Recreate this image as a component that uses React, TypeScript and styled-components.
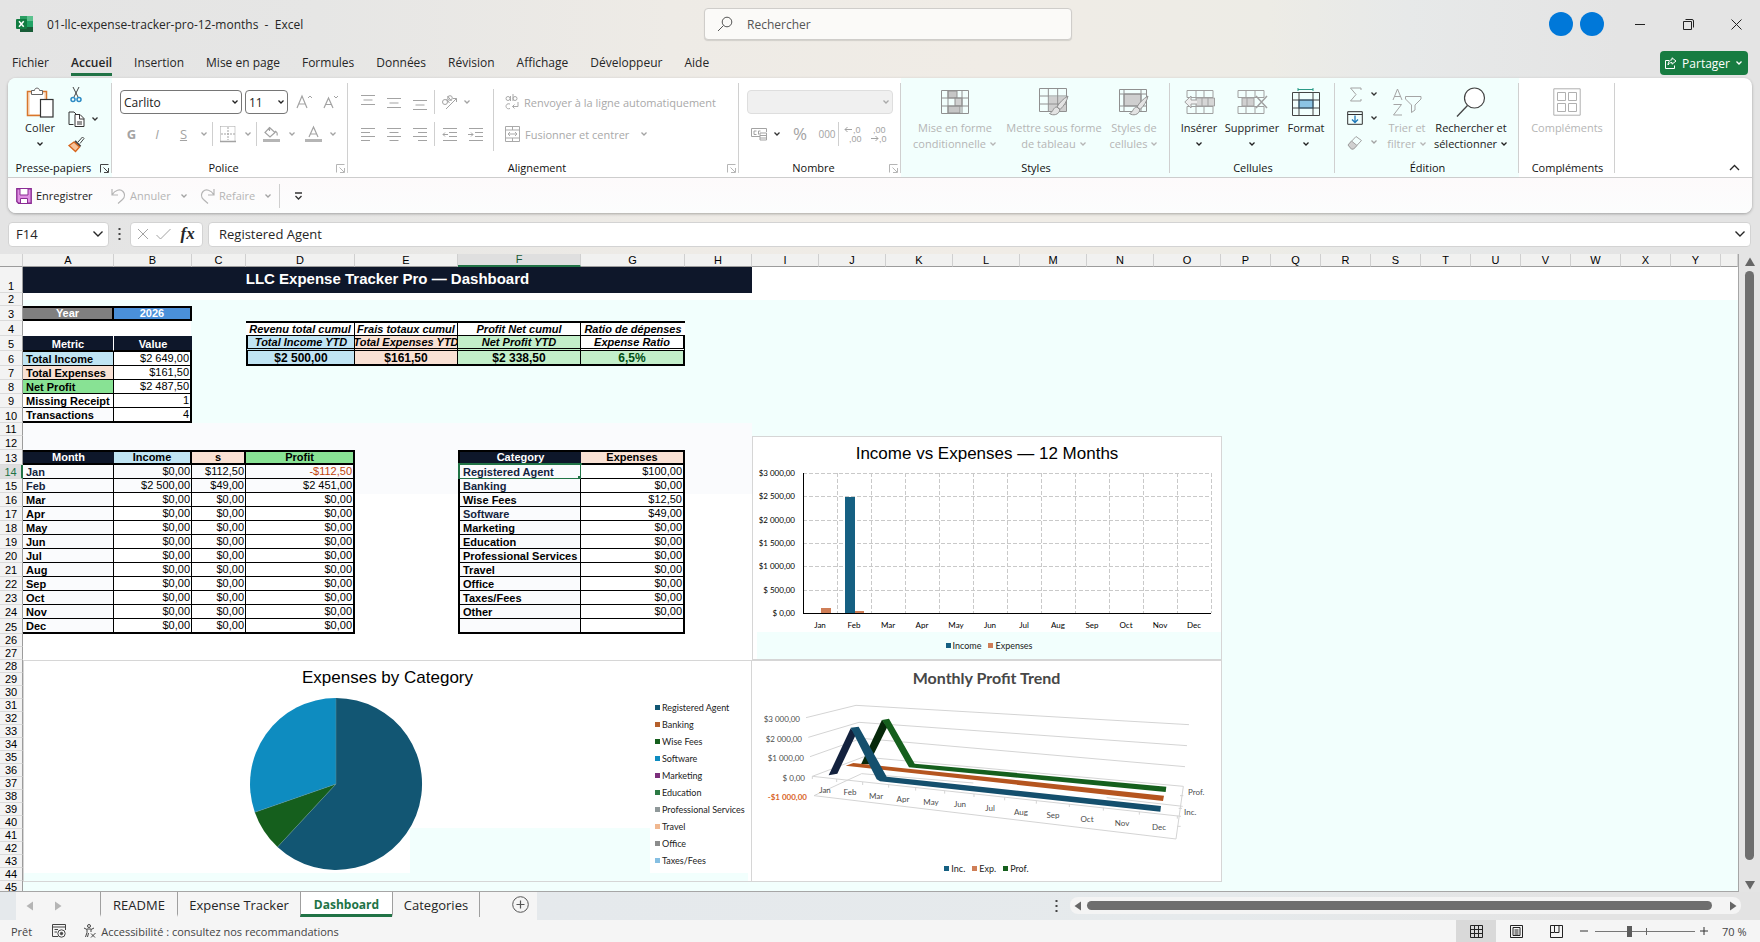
import React from 'react';
import styled, { createGlobalStyle, css } from 'styled-components';

const ui = "'Open Sans', 'Noto Sans', sans-serif";
const arial = "'Liberation Sans', Arial, sans-serif";
const lato = "Lato, 'Open Sans', sans-serif";
const mint = '#f2fffd';
const green = '#217346';

const Global = createGlobalStyle`
  *, *::before, *::after { box-sizing: border-box; }
  body { margin: 0; font-family: ${ui}; font-size: 12px; color: #262626; }
  button, select, input { font: inherit; color: inherit; margin: 0; }
  button { background: none; border: 0; padding: 0; }
  svg { display: block; flex: none; overflow: visible; }
`;

const Window = styled.div`
  height: 100vh;
  min-height: 600px;
  display: flex;
  flex-direction: column;
  overflow: hidden;
  background: linear-gradient(90deg, #e4e4e4 0%, #e6e6e5 18%, #eeebe6 38%, #f0ece6 56%, #edece6 72%, #e7e9e9 80%, #e4e4e4 92%, #e4e4e4 100%);
`;

/* ---------- title bar ---------- */
const TitleBar = styled.header`
  height: 48px;
  flex: none;
  display: grid;
  grid-template-columns: 1fr 368px 1fr;
  align-items: center;
  padding-left: 16px;
`;
const DocName = styled.h1`
  display: flex;
  align-items: center;
  gap: 14px;
  margin: 0;
  font-size: 12px;
  font-weight: 400;
  white-space: pre;
`;
const SearchBox = styled.label`
  height: 32px;
  display: flex;
  align-items: center;
  gap: 12px;
  padding: 0 12px;
  background: #fbfaf8;
  border: 1px solid #cfcdca;
  border-radius: 4px;
  box-shadow: 0 1px 1px rgba(0, 0, 0, 0.12);
  input {
    flex: 1;
    min-width: 0;
    border: 0;
    background: none;
    outline: 0;
    font-size: 12px;
  }
  input::placeholder { color: #555; opacity: 1; }
`;
const WindowControls = styled.div`
  display: flex;
  justify-content: flex-end;
  align-items: center;
`;
const Avatar = styled.span`
  width: 24px;
  height: 24px;
  margin-right: 7px;
  border-radius: 50%;
  background: #0078d9;
`;
const ControlButton = styled.button`
  width: 48px;
  height: 48px;
  display: grid;
  place-items: center;
`;
const Controls = styled.div`
  display: flex;
  margin-left: 5px;
`;

/* ---------- tabs ---------- */
const TabRow = styled.nav`
  height: 30px;
  flex: none;
  display: flex;
  justify-content: space-between;
  padding: 3px 12px 3px 12px;
`;
const TabList = styled.div`
  display: flex;
  gap: 22px;
`;
const RibbonTab = styled.button<{ $active?: boolean }>`
  height: 25px;
  padding-top: 2px;
  font-size: 12px;
  line-height: 20px;
  border-bottom: 3px solid ${p => (p.$active ? green : 'transparent')};
  font-weight: ${p => (p.$active ? 600 : 400)};
`;
const ShareButton = styled.button`
  height: 24px;
  display: flex;
  align-items: center;
  gap: 5px;
  padding: 0 5px;
  border-radius: 4px;
  background: #177c41;
  color: #fff;
  font-size: 12px;
`;

/* ---------- ribbon ---------- */
const RibbonCard = styled.section`
  flex: none;
  margin: 0 8px;
  border-radius: 8px;
  background: #fff;
  box-shadow: 0 1px 3px rgba(0, 0, 0, 0.3);
  overflow: hidden;
`;
const Groups = styled.div`
  height: 100px;
  display: flex;
  border-bottom: 1px solid #cdcdcd;
`;
const Group = styled.div<{ $w: number; $tint?: boolean }>`
  flex: 0 1 ${p => p.$w}px;
  display: flex;
  flex-direction: column;
  background: linear-gradient(#d0d0d0, #d0d0d0) right center / 1px 90px no-repeat, ${p => (p.$tint ? mint : '#fff')};
`;
const GroupBody = styled.div<{ $left?: number; $center?: boolean }>`
  flex: 1;
  display: flex;
  align-items: flex-start;
  justify-content: ${p => (p.$center ? 'center' : 'flex-start')};
  padding-left: ${p => p.$left ?? 0}px;
`;
const GroupFoot = styled.div`
  height: 18px;
  display: flex;
  align-items: center;
  padding: 0 1px 0 2px;
  font-size: 11px;
  line-height: 18px;
  color: #111;
  text-align: center;
  span { flex: 1; }
`;
const Launcher = styled.button`
  width: 14px;
  height: 14px;
  display: grid;
  place-items: center;
`;
const Stack = styled.div<{ $top: number; $gap?: number; $left?: number }>`
  display: flex;
  flex-direction: column;
  gap: ${p => p.$gap ?? 0}px;
  padding-top: ${p => p.$top}px;
  padding-left: ${p => p.$left ?? 0}px;
`;
const ToolRow = styled.div`
  display: flex;
  align-items: center;
  height: 24px;
`;
const Tool = styled.button<{ $w?: number; $off?: boolean }>`
  width: ${p => p.$w ?? 26}px;
  height: 25px;
  display: flex;
  align-items: center;
  justify-content: center;
  color: ${p => (p.$off ? '#a3a3a3' : '#333')};
`;
const WideTool = styled.button`
  height: 24px;
  display: flex;
  align-items: center;
  gap: 5px;
  color: #a9a9a9;
  font-size: 11px;
  white-space: nowrap;
`;
const Rule = styled.i<{ $h?: number; $m?: number }>`
  width: 1px;
  height: ${p => p.$h ?? 24}px;
  margin: 0 ${p => p.$m ?? 1}px;
  background: #cfcfcf;
`;
const Letter = styled.span<{ $size?: number; $weight?: number; $italic?: boolean; $under?: boolean }>`
  font-size: ${p => p.$size ?? 13}px;
  line-height: 18px;
  font-weight: ${p => p.$weight ?? 400};
  font-style: ${p => (p.$italic ? 'italic' : 'normal')};
  text-decoration: ${p => (p.$under ? 'underline' : 'none')};
`;
const SelectWrap = styled.div<{ $w: number; $off?: boolean }>`
  width: ${p => p.$w}px;
  height: 24px;
  display: grid;
  align-items: center;
  margin-right: 3px;
  border: 1px solid ${p => (p.$off ? '#dedede' : '#767676')};
  border-radius: 4px;
  background: ${p => (p.$off ? '#f0f0f0' : '#fff')};
  color: ${p => (p.$off ? '#a9a9a9' : '#222')};
  select, svg { grid-area: 1 / 1; }
  select {
    appearance: none;
    height: 22px;
    padding: 0 3px;
    border: 0;
    background: none;
    font-size: 12px;
    outline: 0;
  }
  svg { justify-self: end; margin-right: 2px; pointer-events: none; }
`;
const BigButton = styled.button<{ $w: number; $off?: boolean }>`
  width: ${p => p.$w}px;
  padding-top: 6px;
  display: flex;
  flex-direction: column;
  align-items: center;
  font-size: 11px;
  line-height: 16px;
  white-space: nowrap;
  color: ${p => (p.$off ? '#b5b5b5' : '#222')};
`;
const BigIcon = styled.span`
  height: 36px;
  display: grid;
  place-items: center;
`;
const Line = styled.span`
  height: 16px;
  display: flex;
  align-items: center;
  gap: 3px;
`;
const CollapseSlot = styled.div`
  flex: 1;
  display: flex;
  align-items: flex-end;
  justify-content: flex-end;
  padding: 0 12px 6px 0;
`;
const QuickBar = styled.div`
  height: 35px;
  display: flex;
  align-items: center;
  padding-left: 8px;
  background: linear-gradient(#fdfafb, #fcfdfd);
`;
const QuickButton = styled.button<{ $off?: boolean; $w: number; $pad?: number }>`
  width: ${p => p.$w}px;
  padding-left: ${p => p.$pad ?? 0}px;
  height: 24px;
  display: flex;
  align-items: center;
  gap: 4px;
  font-size: 11px;
  color: ${p => (p.$off ? '#b5b5b5' : '#222')};
`;

/* ---------- formula bar ---------- */
const FormulaBar = styled.div`
  height: 41px;
  flex: none;
  display: flex;
  align-items: center;
  padding: 1px 9px 0 8px;
`;
const Field = styled.div<{ $w?: number; $pad: number }>`
  flex: ${p => (p.$w ? `0 0 ${p.$w}px` : '1')};
  min-width: 0;
  height: 25px;
  display: flex;
  align-items: center;
  padding: 0 4px 0 ${p => p.$pad}px;
  border: 1px solid #d3d3d3;
  border-radius: 4px;
  background: #fff;
  input {
    flex: 1;
    min-width: 0;
    width: 0;
    border: 0;
    padding: 0;
    outline: 0;
    background: none;
    font-size: 13px;
  }
`;
const Dots = styled.span<{ $w: number }>`
  width: ${p => p.$w}px;
  flex: none;
  display: grid;
  place-items: center;
`;
const Fx = styled.span`
  font: italic 700 17px 'Liberation Serif', serif;
  width: 22px;
  text-align: center;
`;

/* ---------- sheet ---------- */
const SheetArea = styled.div`
  flex: 1;
  min-height: 0;
  display: flex;
`;
const Viewport = styled.main`
  position: relative;
  flex: 1;
  min-width: 0;
  overflow: hidden;
  border-right: 1px solid #a6a6a6;
  border-bottom: 1px solid #a6a6a6;
  background:
    linear-gradient(#fff, #fff) 23px 13px / 100% 33px no-repeat,
    linear-gradient(#fff, #fff) 23px 67px / 168px 15px no-repeat,
    linear-gradient(#fff, #fff) 23px 240px / 729px 388px no-repeat,
    linear-gradient(#fafbfd, #fafbfd) 23px 169px / 729px 71px no-repeat,
    ${mint};
`;
const Grid = styled.table`
  width: 100%;
  table-layout: fixed;
  border-collapse: separate;
  border-spacing: 0;
  font-family: ${arial};
  font-size: 11px;
  line-height: 11px;
  color: #000;
`;
const Row = styled.tr<{ $h: number }>`
  height: ${p => p.$h}px;
`;
const ColHead = styled.th<{ $on?: boolean }>`
  height: 13px;
  padding: 0;
  font-weight: 400;
  overflow: hidden;
  background: ${p => (p.$on ? '#dfdfdf' : '#f1f1f0')};
  color: ${p => (p.$on ? '#1c5a37' : '#000')};
  border-right: 1px solid #d0d0d0;
  border-bottom: ${p => (p.$on ? `2px solid ${green}` : '1px solid #9c9c9c')};
`;
const RowHead = styled.th<{ $on?: boolean }>`
  padding: 0;
  vertical-align: bottom;
  font-weight: 400;
  text-align: center;
  background: ${p => (p.$on ? '#dedede' : '#f3f3f3')};
  color: ${p => (p.$on ? green : '#000')};
  border-right: ${p => (p.$on ? `2px solid ${green}` : '1px solid #9c9c9c')};
  border-bottom: 1px solid #dadada;
`;

type Edge = { t?: string; r?: string; b?: string; l?: string };
type CellSpec = Edge & {
  v?: string;
  bg?: string;
  fg?: string;
  bold?: boolean;
  italic?: boolean;
  size?: number;
  al?: 'left' | 'center' | 'right';
  span?: number;
  sel?: boolean;
};
const Cell = styled.td<{ $s: CellSpec }>`
  position: relative;
  padding: 0 0 ${p => (p.$s.span ? 4 : 0)}px;
  overflow: ${p => (p.$s.sel ? 'visible' : 'hidden')};
  vertical-align: ${p => (p.$s.al === 'right' || p.$s.span ? 'middle' : 'bottom')};
  white-space: nowrap;
  background: ${p => p.$s.bg ?? 'transparent'};
  color: ${p => p.$s.fg ?? '#000'};
  font-weight: ${p => (p.$s.bold ? 700 : 400)};
  font-style: ${p => (p.$s.italic ? 'italic' : 'normal')};
  font-size: ${p => p.$s.size ?? 11}px;
  border: 0 solid #000;
  ${p => p.$s.t && css`border-top: ${p.$s.t};`}
  ${p => p.$s.r && css`border-right: ${p.$s.r};`}
  ${p => p.$s.b && css`border-bottom: ${p.$s.b};`}
  ${p => p.$s.l && css`border-left: ${p.$s.l};`}
`;
const CellText = styled.span<{ $al: string }>`
  display: flex;
  justify-content: ${p => (p.$al === 'center' ? 'center' : p.$al === 'right' ? 'flex-end' : 'flex-start')};
  padding: ${p => (p.$al === 'center' ? '0' : p.$al === 'right' ? '0 1px 0 0' : '0 0 0 3px')};
`;
const Selection = styled.span`
  position: absolute;
  inset: -2px;
  border: 2px solid ${green};
  &::after {
    content: '';
    position: absolute;
    right: -3px;
    bottom: -3px;
    width: 5px;
    height: 5px;
    background: ${green};
  }
`;

const COLS = 'ABCDEFGHIJKLMNOPQRSTUVWXY'.split('');
const WIDTHS = [91, 78, 54, 109, 103, 123, 104, 67, 67, 67, 67, 67, 67, 67, 67, 50, 50, 50, 50, 50, 50, 50, 50, 50, 50];
const HEIGHTS = [26, 13, 15, 15, 15, 15, 14, 14, 14, 15, 13, 14, 15, ...Array(11).fill(14), 15, 13, 13, ...Array(18).fill(13)];

const thin = '1px solid #000';
const thick = '2px solid #000';
const navy = '#0e172a';
const blue = '#c0e4f3';
const peach = '#f9e1d4';
const lime = '#88e294';
const pale = '#c3efca';

const cells: Record<string, CellSpec> = {
  A1: { v: 'LLC Expense Tracker Pro — Dashboard', bg: navy, fg: '#fff', bold: true, size: 15, al: 'center', span: 8 },
  A3: { v: 'Year', bg: '#7f7f7f', fg: '#fff', bold: true, al: 'center', t: thick, r: thick, b: thick },
  B3: { v: '2026', bg: '#4a90d9', fg: '#fff', bold: true, al: 'center', t: thick, r: thick, b: thick },
  A5: { v: 'Metric', bg: navy, fg: '#fff', bold: true, al: 'center', r: '1px solid #fff', b: thin },
  B5: { v: 'Value', bg: navy, fg: '#fff', bold: true, al: 'center', b: thin },
  A6: { v: 'Total Income', bg: blue, bold: true, t: thin, r: thin, b: thin },
  B6: { v: '$2 649,00', bg: '#fff', al: 'right', t: thin, r: thick, b: thin },
  A7: { v: 'Total Expenses', bg: peach, bold: true, r: thin, b: thin },
  B7: { v: '$161,50', bg: '#fff', al: 'right', r: thick, b: thin },
  A8: { v: 'Net Profit', bg: lime, bold: true, r: thin, b: thin },
  B8: { v: '$2 487,50', bg: '#fff', al: 'right', r: thick, b: thin },
  A9: { v: 'Missing Receipt', bg: '#fff', bold: true, r: thin, b: thin },
  B9: { v: '1', bg: '#fff', al: 'right', r: thick, b: thin },
  A10: { v: 'Transactions', bg: '#fafbfd', bold: true, r: thin, b: thick },
  B10: { v: '4', bg: '#fff', al: 'right', r: thick, b: thick },
};

const kpis: [string, string, string, string, string, string][] = [
  ['D', 'Revenu total cumul', 'Total Income YTD', '$2 500,00', blue, blue],
  ['E', 'Frais totaux cumul', 'Total Expenses YTD', '$161,50', peach, peach],
  ['F', 'Profit Net cumul', 'Net Profit YTD', '$2 338,50', pale, pale],
  ['G', 'Ratio de dépenses', 'Expense Ratio', '6,5%', '#fff', pale],
];
kpis.forEach(([col, fr, en, value, bgName, bgValue]) => {
  const left = col === 'D' ? thick : undefined;
  const right = col === 'G' ? thick : thin;
  const double = '3px double #000';
  cells[`${col}4`] = { v: fr, bg: '#fff', bold: true, italic: true, al: 'center', t: thick, r: col === 'G' ? undefined : thin, b: thin };
  cells[`${col}5`] = { v: en, bg: bgName, bold: true, italic: true, al: 'center', l: left, r: right, b: double };
  cells[`${col}6`] = { v: value, bg: bgValue, fg: col === 'G' ? '#004d14' : '#000', bold: true, size: 12, al: 'center', l: left, r: right, b: thick };
});

const head = { bold: true, al: 'center' as const, t: thick, b: thick };
cells.A13 = { ...head, v: 'Month', bg: navy, fg: '#fff' };
cells.B13 = { ...head, v: 'Income', bg: blue, r: thick };
cells.C13 = { ...head, v: 's', bg: peach, r: thick };
cells.D13 = { ...head, v: 'Profit', bg: lime, r: thick };
cells.F13 = { ...head, v: 'Category', bg: navy, fg: '#fff', l: thick };
cells.G13 = { ...head, v: 'Expenses', bg: peach, r: thick };

const MONTHS = ['Jan', 'Feb', 'Mar', 'Apr', 'May', 'Jun', 'Jul', 'Aug', 'Sep', 'Oct', 'Nov', 'Dec'];
const zero = ['$0,00', '$0,00', '$0,00'];
MONTHS.forEach((m, i) => {
  const n = 14 + i;
  const b = i === 11 ? thick : thin;
  const [inc, exp, prof] = i === 0 ? ['$0,00', '$112,50', '-$112,50'] : i === 1 ? ['$2 500,00', '$49,00', '$2 451,00'] : zero;
  const soft = i < 2 ? '#fafbfd' : '#fff';
  cells[`A${n}`] = { v: m, bold: true, bg: '#fafbfd', fg: i < 2 ? '#14243f' : '#000', r: thin, b };
  cells[`B${n}`] = { v: inc, al: 'right', bg: soft, r: thin, b };
  cells[`C${n}`] = { v: exp, al: 'right', bg: soft, r: thin, b };
  cells[`D${n}`] = { v: prof, al: 'right', bg: soft, fg: i === 0 ? '#c0430c' : '#000', r: thick, b };
});

const CATEGORIES = ['Registered Agent', 'Banking', 'Wise Fees', 'Software', 'Marketing', 'Education', 'Professional Services', 'Travel', 'Office', 'Taxes/Fees', 'Other', ''];
const spent: Record<string, string> = { 'Registered Agent': '$100,00', 'Wise Fees': '$12,50', Software: '$49,00', '': '' };
CATEGORIES.forEach((c, i) => {
  const n = 14 + i;
  const b = i === 11 ? thick : thin;
  cells[`F${n}`] = { v: c, bold: true, bg: '#fafbfd', fg: [0, 1, 3].includes(i) ? '#14243f' : '#000', l: thick, r: thin, b, sel: i === 0 };
  cells[`G${n}`] = { v: spent[c] ?? '$0,00', al: 'right', bg: '#fff', r: thick, b };
});

function SheetRow({ n }: { n: number }) {
  const out: React.ReactNode[] = [];
  for (let i = 0; i < COLS.length; i += 1) {
    const s = cells[`${COLS[i]}${n}`] ?? {};
    out.push(
      <Cell key={i} $s={s} colSpan={s.span}>
        {s.v && <CellText $al={s.al ?? 'left'}>{s.v}</CellText>}
        {s.sel && <Selection />}
      </Cell>,
    );
    if (s.span) i += s.span - 1;
  }
  return (
    <Row $h={HEIGHTS[n - 1]}>
      <RowHead scope="row" $on={n === 14}>{n}</RowHead>
      {out}
      <td />
    </Row>
  );
}

/* ---------- charts ---------- */
const ChartBox = styled.figure<{ $x: number; $y: number; $w: number; $h: number; $bg?: string }>`
  position: absolute;
  left: ${p => p.$x}px;
  top: ${p => p.$y}px;
  width: ${p => p.$w}px;
  height: ${p => p.$h}px;
  margin: 0;
  display: flex;
  flex-direction: column;
  border: 1px solid #d6d6d6;
  background: ${p => p.$bg ?? '#fff'};
  font-family: ${lato};
  font-size: 8px;
`;
const ChartTitle = styled.figcaption<{ $bold?: boolean }>`
  height: 33px;
  flex: none;
  line-height: 34px;
  text-align: center;
  font-family: ${p => (p.$bold ? lato : arial)};
  font-size: ${p => (p.$bold ? 16 : 17)}px;
  font-weight: ${p => (p.$bold ? 700 : 400)};
  color: ${p => (p.$bold ? '#474747' : '#000')};
`;
const Legend = styled.ul<{ $column?: boolean; $tint?: boolean }>`
  list-style: none;
  margin: 0;
  padding: 0;
  display: flex;
  flex-direction: ${p => (p.$column ? 'column' : 'row')};
  justify-content: center;
  gap: ${p => (p.$column ? 0 : 7)}px;
  height: ${p => (p.$column ? 'auto' : '27px')};
  margin-left: ${p => (p.$tint ? 4 : 0)}px;
  background: ${p => (p.$tint ? mint : 'transparent')};
  font-size: 9px;
`;
const LegendItem = styled.li<{ $c: string; $h: number }>`
  height: ${p => p.$h}px;
  display: flex;
  align-items: center;
  gap: 2px;
  color: #222;
  &::before {
    content: '';
    width: 5px;
    height: 5px;
    background: ${p => p.$c};
  }
`;
const PieBody = styled.div`
  display: flex;
  justify-content: space-between;
  padding: 3px 5px 0 225px;
`;
const PieLegend = styled.div`
  padding-top: 2px;
  width: 91px;
`;

function BarChart() {
  const labels = ['$3 000,00', '$2 500,00', '$2 000,00', '$1 500,00', '$1 000,00', '$ 500,00', '$ 0,00'];
  const ys = [3, 26, 50, 73, 96, 120, 143];
  return (
    <ChartBox $x={752} $y={182} $w={470} $h={224}>
      <ChartTitle>Income vs Expenses — 12 Months</ChartTitle>
      <svg width="468" height="162" viewBox="0 0 468 162" shapeRendering="crispEdges">
        {ys.slice(0, 6).map(y => <line key={y} x1="50" x2="458" y1={y + 0.5} y2={y + 0.5} stroke="#c9c9c9" strokeDasharray="4 2" />)}
        {MONTHS.map((m, i) => <line key={m} x1={84.5 + i * 34} x2={84.5 + i * 34} y1="3" y2="143" stroke="#c9c9c9" strokeDasharray="4 2" />)}
        <rect x="68" y="138" width="10" height="5" fill="#cf7e57" />
        <rect x="92" y="27" width="10" height="116" fill="#156082" />
        <rect x="102" y="141" width="9" height="2" fill="#cf7e57" />
        <path d="M50.500 3V143.500H458" fill="none" stroke="#000" />
        {labels.map((l, i) => <text key={l} x="42" y={ys[i] + 3} textAnchor="end">{l}</text>)}
        {MONTHS.map((m, i) => <text key={m} x={67 + i * 34} y="158" textAnchor="middle">{m}</text>)}
      </svg>
      <Legend $tint>
        <LegendItem $c="#156082" $h={26}>Income</LegendItem>
        <LegendItem $c="#cf7e57" $h={26}>Expenses</LegendItem>
      </Legend>
    </ChartBox>
  );
}

const trendY: [string, number, number][] = [['$3 000,00', 48, 62], ['$2 000,00', 50, 82], ['$1 000,00', 52, 101], ['$ 0,00', 53, 121]];
const trendX = [[73, 133], [98, 135], [124, 139], [151, 142], [179, 145], [208, 147], [238, 151], [269, 155], [301, 158], [335, 162], [370, 166], [407, 170]];
const trendTicks = [[290, 390], [368, 399], [446, 407], [527, 416], [614, 425], [702, 435], [794, 445], [889, 455], [988, 465], [1090, 476], [1198, 488], [1312, 500]];

function TrendChart() {
  return (
    <ChartBox $x={751} $y={406} $w={471} $h={222}>
      <ChartTitle $bold>Monthly Profit Trend</ChartTitle>
      <svg width="469" height="165" viewBox="0 34 469 165" fill="#4d4d4d">
        <g transform="translate(-12 -11) scale(.33333)" fill="none">
          <g stroke="#d4d4d4" strokeWidth="3">
            <path d="M198 206L348 169L1347 227" />
            <path d="M205 265L357 220L1341 290" />
            <path d="M210 323L365 268L1335 353" />
            <path d="M217 382L370 324L1330 412" />
            <path d="M222 440L365 374L700 402" />
            <path d="M222 440L1308 570L1330 412" />
            <path d="M217 382L1323 502M1100 446L1328 472M217 382v8" />
            {trendTicks.map(([x, y]) => <path key={x} d={`M${x} ${y}v9`} />)}
            <path d="M1320 440h10M1316 478h10M1312 532h10" />
          </g>
          <path d="M363 346L426 212L442 234L386 346Z" fill="#06280a" />
          <path d="M426 213L447 209L524 344L1279 413L1277 429L507 355L432 222Z" fill="#155f1d" />
          <path d="M317 350L340 342L1272 440L1269 456Z" fill="#b5551f" />
          <path d="M266 379L332 238L348 256L292 374Z" fill="#12213d" />
          <path d="M332 236L356 233L440 383L1263 471L1261 488L420 397L410 391Z" fill="#144f6d" />
        </g>
        {trendY.map(([l, x, y]) => <text key={l} x={x} y={y} textAnchor="end">{l}</text>)}
        <text x="55" y="140" textAnchor="end" fill="#d9662b" fontWeight="700">-$1 000,00</text>
        {MONTHS.map((m, i) => <text key={m} x={trendX[i][0]} y={trendX[i][1]} textAnchor="middle">{m}</text>)}
        <text x="436" y="135">Prof.</text>
        <text x="432" y="155">Inc.</text>
      </svg>
      <Legend>
        <LegendItem $c="#156082" $h={18}>Inc.</LegendItem>
        <LegendItem $c="#cf7e57" $h={18}>Exp.</LegendItem>
        <LegendItem $c="#155f1d" $h={18}>Prof.</LegendItem>
      </Legend>
    </ChartBox>
  );
}

const pieLegend: [string, string][] = [
  ['Registered Agent', '#125673'], ['Banking', '#b5602c'], ['Wise Fees', '#155f1d'], ['Software', '#0e8cc0'], ['Marketing', '#7c2f7c'],
  ['Education', '#2c7a44'], ['Professional Services', '#8f9899'], ['Travel', '#f0b78f'], ['Office', '#8c8c8c'], ['Taxes/Fees', '#86bfe2'],
];

function PieChart() {
  const bg = `linear-gradient(${mint}, ${mint}) 386px 167px / 240px 54px no-repeat, linear-gradient(${mint}, ${mint}) 0 212px / 724px 8px no-repeat, #fff`;
  return (
    <ChartBox $x={23} $y={406} $w={729} $h={222} $bg={bg}>
      <ChartTitle>Expenses by Category</ChartTitle>
      <PieBody>
        <svg width="174" height="174" viewBox="-87 -87 174 174">
          <path d="M0 0L0 -86A86 86 0 1 1 -58.500 63Z" fill="#125673" />
          <path d="M0 0L-58.500 63A86 86 0 0 1 -81.200 28.300Z" fill="#155f1d" />
          <path d="M0 0L-81.200 28.300A86 86 0 0 1 0 -86Z" fill="#0e8cc0" />
          <path d="M0 -86V0L-58.500 63M0 0L-81.200 28.300" fill="none" stroke="#5f8f96" strokeWidth="0.500" />
        </svg>
        <PieLegend>
          <Legend $column>
            {pieLegend.map(([t, c]) => <LegendItem key={t} $c={c} $h={17}>{t}</LegendItem>)}
          </Legend>
        </PieLegend>
      </PieBody>
    </ChartBox>
  );
}

/* ---------- scroll bars, sheet tabs, status ---------- */
const VScroll = styled.div`
  width: 21px;
  display: flex;
  flex-direction: column;
  align-items: center;
  gap: 4px;
  padding: 3px 0 2px;
`;
const VTrack = styled.div`
  flex: 1;
  width: 9px;
  margin-bottom: 16px;
  border-radius: 5px;
  background: #6e6e6e;
`;
const TabBar = styled.footer`
  height: 28px;
  flex: none;
  display: flex;
  background: linear-gradient(90deg, #e5e9ec 30%, #e6eaec 70%, #e3e3e3 90%);
`;
const SheetTabs = styled.div`
  flex: none;
  margin-left: 16px;
  display: flex;
  background: #f5f5f5;
`;
const ArrowPair = styled.div`
  width: 84px;
  display: flex;
  align-items: center;
  gap: 18px;
  padding-left: 9px;
`;
const SheetTab = styled.button<{ $w: number; $active?: boolean }>`
  width: ${p => p.$w}px;
  height: 25px;
  padding-top: 3px;
  border-left: 1px solid #9f9f9f;
  border-bottom: 3px solid transparent;
  font-size: 13px;
  line-height: 18px;
  white-space: nowrap;
  ${p => p.$active && css`
    background: #fff;
    color: ${green};
    font-size: 12px;
    font-weight: 700;
    border-bottom-color: ${green};
  `}
`;
const PlusSlot = styled.button`
  width: 58px;
  height: 25px;
  display: grid;
  place-items: center;
  padding-left: 24px;
  border-left: 1px solid #9f9f9f;
`;
const HScroll = styled.div`
  height: 17px;
  flex: 1;
  margin: 5px 19px 0 4px;
  display: flex;
  align-items: center;
  gap: 4px;
  padding: 0 3px;
  border-radius: 8px;
  background: #f4f4f4;
`;
const HThumb = styled.div`
  flex: 1;
  height: 9px;
  margin-right: 12px;
  border-radius: 5px;
  background: #6e6e6e;
`;
const BarGap = styled.div`
  flex: 0 1 509px;
`;
const StatusBar = styled.div`
  height: 22px;
  flex: none;
  display: flex;
  align-items: center;
  padding-left: 11px;
  background: #f5f5f5;
  font-size: 11px;
  color: #444;
`;
const StatusItem = styled.div<{ $left: number }>`
  display: flex;
  align-items: center;
  gap: 3px;
  margin-left: ${p => p.$left}px;
`;
const Spacer = styled.div`
  flex: 1;
`;
const ViewButton = styled.button<{ $on?: boolean }>`
  width: 40px;
  height: 22px;
  display: grid;
  place-items: center;
  background: ${p => (p.$on ? '#d9d9d9' : 'transparent')};
`;
const ZoomRange = styled.input`
  appearance: none;
  width: 100px;
  height: 14px;
  margin: 0 3px;
  background:
    linear-gradient(#666, #666) 51px center / 1px 7px no-repeat,
    linear-gradient(#777, #777) left center / 100% 1px no-repeat;
  &::-webkit-slider-thumb {
    appearance: none;
    width: 5px;
    height: 11px;
    background: #5c5c5c;
  }
`;
const ZoomValue = styled.span`
  width: 50px;
  padding-left: 12px;
  white-space: nowrap;
`;

/* ---------- icons ---------- */
const Chevron = ({ s = 6, c = 'currentColor' }: { s?: number; c?: string }) => (
  <svg width={s + 2} height={s + 2} viewBox="0 0 8 8" fill="none" stroke={c} strokeWidth="1.300"><path d="M1.500 2.500L4 5L6.500 2.500" /></svg>
);
const Triangle = ({ dir, c = '#666' }: { dir: 'u' | 'd' | 'l' | 'r'; c?: string }) => (
  <svg width="10" height="10" viewBox="0 0 10 10" fill={c}>
    <path d={{ u: 'M5 0.500L10 9H0Z', d: 'M5 9.500L10 1H0Z', l: 'M1.500 5L8 0.500V9.500Z', r: 'M8.500 5L2 0.500V9.500Z' }[dir]} />
  </svg>
);
const Ic = ({ w = 16, h = 16, children, color }: { w?: number; h?: number; children: React.ReactNode; color?: string }) => (
  <svg width={w} height={h} viewBox={`0 0 ${w} ${h}`} fill="none" stroke={color ?? 'currentColor'}>{children}</svg>
);
const ExcelLogo = () => (
  <svg width="17" height="16" viewBox="0 0 17 16">
    <rect x="4" y="0" width="13" height="16" rx="1" fill="#21a366" />
    <rect x="4" y="0" width="7" height="5" fill="#2b9f63" />
    <rect x="11" y="0" width="6" height="5" fill="#5cc28e" />
    <rect x="4" y="5" width="7" height="6" fill="#107c41" />
    <rect x="4" y="11" width="13" height="5" fill="#185c37" />
    <rect x="0" y="3" width="11" height="10" rx="1" fill="#107c41" />
    <path d="M3 5.300L7.700 10.700M7.700 5.300L3 10.700" stroke="#fff" strokeWidth="1.500" />
  </svg>
);
const LauncherIcon = ({ off }: { off?: boolean }) => <Ic w={9} h={9} color={off ? '#b5b5b5' : '#444'}><path d="M.5 8.500V.5H8.500M3.500 3.500L8 8M8.500 4v4.500H4" /></Ic>;
const PasteIcon = () => (
  <Ic w={28} h={31}>
    <rect x="1.500" y="4.500" width="19" height="24" fill="#fbe3cd" stroke="#d8762c" strokeWidth="1.500" />
    <rect x="4" y="7" width="14" height="20" fill="#fff" stroke="none" />
    <path d="M5.500 7.500V3.500H8.500C8.500 0.300 13.500 0.300 13.500 3.500H16.500V7.500Z" fill="#fff" stroke="#666" />
    <rect x="14.500" y="12.500" width="12.500" height="17.500" fill="#fff" stroke="#333" strokeWidth="1.200" />
  </Ic>
);
const ScissorsIcon = () => (
  <Ic w={12} h={17}><path d="M3 1L8 11M9 1L4 11" stroke="#444" /><circle cx="3" cy="13.500" r="2" stroke="#2d8bc4" strokeWidth="1.500" /><circle cx="9" cy="13.500" r="2" stroke="#2d8bc4" strokeWidth="1.500" /></Ic>
);
const CopyIcon = () => (
  <Ic w={17} h={16}><path d="M5.500 13.500H1V1H6L8 3" /><path d="M7 3.500H12L16 7.500V15.500H7Z" fill="#fff" /><path d="M11.500 3.500V8H16M9 11h5M9 13h5" /></Ic>
);
const BrushIcon = () => (
  <Ic w={17} h={16}><path d="M10 6L14.500 1L16 2.500L12 7.500" stroke="#444" /><path d="M7 5L12.500 10.500" stroke="#444" strokeWidth="2" /><path d="M6 6L1 9.500L7.500 15.500L11.500 11Z" fill="#f7c39b" stroke="#d8651c" strokeWidth="1.300" /></Ic>
);
const GrowFont = ({ up }: { up?: boolean }) => (
  <Ic w={17} h={16}><path d={up ? 'M1 14L6 2L11 14M3 10H9.500' : 'M2 14L6.500 4L11 14M4 10.500H9.500'} strokeWidth="1.200" /><path d={up ? 'M12 4L14 2L16 4' : 'M12 2L14 4L16 2'} /></Ic>
);
const BordersIcon = () => <Ic><path d="M.5 .5H15M.5 .5V15M15 .5V15" strokeDasharray="1 1" /><path d="M0 15.500H16" strokeWidth="1.500" /><path d="M8 1V14M1 8H15" strokeDasharray="2 1" /></Ic>;
const FillIcon = () => <Ic w={17} h={16}><path d="M6.500 1.500L12 6.500L7 11L2 6.500ZM6.500 1V5M12 5C14 6 14.500 8 14 9.500" strokeWidth="1.200" /><rect x="0" y="13" width="17" height="3" fill="#b5b5b5" stroke="none" /></Ic>;
const FontColor = () => <Ic w={17} h={16}><path d="M4 11L8.500 1L13 11M5.500 8H11.500" strokeWidth="1.200" /><rect x="0" y="13" width="17" height="3" fill="#b5b5b5" stroke="none" /></Ic>;
const Bars = ({ kind, top }: { kind: 'l' | 'c' | 'r'; top?: number }) => {
  const rows = top === undefined ? [1.5, 5.5, 9.5, 13.5] : [top, top + 4.5, top + 9];
  return (
    <Ic w={15} h={15}>
      {rows.map((y, i) => {
        const len = i % 2 === 0 ? 14 : 9;
        const x = kind === 'l' ? 0 : kind === 'r' ? 14 - len : (14 - len) / 2;
        return <path key={y} d={`M${x} ${y}h${len}`} />;
      })}
    </Ic>
  );
};
const Indent = ({ out }: { out?: boolean }) => <Ic w={15} h={15}><path d={out ? 'M1 1.500H15M7 5.500H15M7 9.500H15M1 13.500H15M6 7.500H1M3 5.500L1 7.500L3 9.500' : 'M1 1.500H15M7 5.500H15M7 9.500H15M1 13.500H15M0 7.500H5M3 5.500L5 7.500L3 9.500'} /></Ic>;
const OrientIcon = () => <Ic w={17} h={16}><circle cx="4" cy="8" r="2.500" /><path d="M5.500 5L8.500 9M6.500 2L10.500 7" /><circle cx="9" cy="4" r="2.300" /><path d="M5 15L15.500 4.500M12 4.500H15.500V8" /></Ic>;
const WrapIcon = () => <Ic w={14} h={16}><circle cx="3" cy="4.500" r="2" /><path d="M5.500 2V7M8 0V7" /><circle cx="10" cy="4.500" r="2" /><path d="M5 10C2 9 1 11 1 12.500S3 15.500 5 14.500M13 8V12.500H7.500M9.500 10.500L7.500 12.500L9.500 14.500" /></Ic>;
const MergeIcon = () => <Ic w={15} h={16}><path d="M.5 .5H14.500V15.500H.5ZM.5 4H14.500M.5 12H14.500M7.500 .5V4M7.500 12V15.500M3 8H12M5 6L3 8L5 10M10 6L12 8L10 10" /></Ic>;
const CurrencyIcon = () => <Ic w={17} h={14}><path d="M9 9.500H.5V1.500H15.500V5" /><path d="M5.500 4H3V7.500H5.500M7.500 7.500V4H9.500" /><path d="M9 6H15.500V13H9ZM9 8.500H15.500M9 11H15.500" /></Ic>;
const DecimalIcon = ({ add }: { add?: boolean }) => (
  <svg width="18" height="18" viewBox="0 0 18 18" fill="currentColor" fontFamily="Liberation Sans" fontSize="9">
    {add ? <><text x="9" y="8">,0</text><text x="5" y="17">,00</text></> : <><text x="3" y="8">,00</text><text x="9" y="17">,0</text></>}
    <path d={add ? 'M8 4.500H1M3.500 2L1 4.500L3.500 7' : 'M1 13.500H8M5.500 11L8 13.500L5.500 16'} fill="none" stroke="currentColor" />
  </svg>
);
const gridLines = (w: number, h: number) => `M.5 .5H${w - 0.5}V${h - 0.5}H.5ZM.5 ${h / 3}H${w}M.5 ${(h / 3) * 2}H${w}M${w / 3} .5V${h}M${(w / 3) * 2} .5V${h}`;
const CondIcon = () => <Ic w={28} h={24} color="#909090"><rect x="7" y="1" width="9" height="7" fill="#c6c6c6" /><rect x="14" y="8" width="7" height="8" fill="#d0d0d0" /><rect x="7" y="16" width="12" height="7" fill="#c6c6c6" /><path d="M.5 .5H27.500V23.500H.5ZM.5 8H28M.5 16H28M7 .5V24M21 .5V24" /></Ic>;
const brush = <path d="M29 8C24 11 20 15 18 19L21 21.500C25 18 28 13 29 8ZM18 19C14 19 14.500 24 10.500 25.500C14 28 20 27 21 21.500Z" fill="#e3e3e3" />;
const TableStyleIcon = () => <Ic w={30} h={28} color="#909090"><path d="M10 9H27V23H10Z" fill="#cfcfcf" stroke="none" /><path d={gridLines(28, 24)} />{brush}</Ic>;
const CellStyleIcon = () => <Ic w={30} h={28} color="#909090"><path d="M5 6H22V18H5Z" fill="#cfcfcf" /><path d="M.5 1.500H27.500V23.500H.5ZM.5 6H28M5 1V24M.5 18H28M22 1V24" />{brush}</Ic>;
const InsertIcon = () => <Ic w={31} h={24} color="#a0a0a0"><path d="M3 .5H29V7.500H3ZM3 16.500H29V23.500H3ZM12 .5V7M20 .5V7M12 16.500V23.500M20 16.500V23.500" /><path d="M12 8H30.500V16H12ZM18 8V16M24 8V16" fill="#d6d6d6" /><path d="M13 10H7V6L.8 12L7 18V14H13" fill="#eee" /></Ic>;
const DeleteIcon = () => <Ic w={31} h={24} color="#a0a0a0"><path d="M1 .5H27V7.500H1ZM1 16.500H27V23.500H1ZM9 .5V7M18 .5V7M9 16.500V23.500M18 16.500V23.500" /><path d="M5 8H17V16H5ZM10 8V16" fill="#d0d0d0" /><path d="M19 6L30 18M30 6L19 18" strokeWidth="1.500" /></Ic>;
const FormatIcon = () => <Ic w={28} h={28} color="#444"><path d="M6 1.500H21M6 0V3M21 0V3" stroke="#2a9a86" /><rect x="7" y="12" width="14" height="8" fill="#8cc4e4" stroke="#2d7fb5" /><path d="M.5 4.500H27.500V27.500H.5ZM.5 12H28M.5 20H28M7 4.500V28M21 4.500V28" /></Ic>;
const SigmaIcon = () => <Ic w={13} h={15}><path d="M12 3V1H1.500L7 7.500L1.500 14H12V12" /></Ic>;
const DownIcon = () => <Ic w={16} h={14} color="#333"><path d="M.7 .7H15.300V13.300H.7ZM.7 3.500H15.300" /><path d="M8 4.500V11.500M5 8.500L8 11.500L11 8.500" stroke="#1c77b8" strokeWidth="1.300" /></Ic>;
const EraserIcon = () => <Ic w={16} h={15}><path d="M1 10L9 1.500L14.500 5.500L6.500 14H4.500Z" /><path d="M1 10L4.500 6L10 10.500L6.500 14H4.500Z" fill="#d0d0d0" /></Ic>;
const SortIcon = () => <Ic w={30} h={28} color="#a5a5a5"><path d="M1 12L5.500 1L10 12M2.500 8.500H8.500M1.500 16.500H9.500L1.500 27H10" /><path d="M13.500 8.500H29V11L23 17V22L19.500 24.500V17L13.500 11Z" /></Ic>;
const FindIcon = () => <Ic w={30} h={30} color="#444"><circle cx="18.500" cy="11" r="10" fill="#fff" strokeWidth="1.200" /><path d="M11.500 18.500L1 29.500" strokeWidth="1.300" /></Ic>;
const AddinIcon = () => <Ic w={28} h={28} color="#b0b0b0"><path d="M.8 .8H27.200V27.200H.8ZM4.500 4.500H12.500V12.500H4.500ZM15.500 4.500H23.500V12.500H15.500ZM4.500 15.500H12.500V23.500H4.500ZM15.500 15.500H23.500V23.500H15.500Z" /></Ic>;
const SaveIcon = () => <Ic w={16} h={16} color="#8b2c94"><path d="M.8 .8H15.200V15.200H2.500L.8 13.500Z" fill="#df8fe2" strokeWidth="1.400" /><path d="M4 1V7H12V1M4.500 15V10.500H11.500V15" fill="#fff" /></Ic>;
const UndoIcon = () => <Ic w={15} h={16}><path d="M1 1V7H7M1 7C4 2 9 .5 12 3.500C14.500 6.500 14 9 11.500 11.500L7 15.500" strokeWidth="1.200" /></Ic>;
const RedoIcon = () => <Ic w={15} h={16}><path d="M14 1V7H8M14 7C11 2 6 .5 3 3.500C.5 6.500 1 9 3.500 11.500L8 15.500" strokeWidth="1.200" /></Ic>;
const DotsIcon = () => <svg width="3" height="12" viewBox="0 0 3 12" fill="#444"><path d="M.5 0h2v2h-2zM.5 5h2v2h-2zM.5 10h2v2h-2z" /></svg>;

const TABS = ['Fichier', 'Accueil', 'Insertion', 'Mise en page', 'Formules', 'Données', 'Révision', 'Affichage', 'Développeur', 'Aide'];

function GroupFooter({ label, launch, off }: { label: string; launch?: boolean; off?: boolean }) {
  return (
    <GroupFoot>
      <span>{label}</span>
      {launch && <Launcher aria-label={`Options ${label}`}><LauncherIcon off={off} /></Launcher>}
    </GroupFoot>
  );
}

function Ribbon() {
  return (
    <RibbonCard>
      <Groups>
        <Group $w={104} $tint>
          <GroupBody $left={8}>
            <BigButton $w={48}><BigIcon><PasteIcon /></BigIcon><Line>Coller</Line><Line><Chevron /></Line></BigButton>
            <Stack $top={4}>
              <Tool $w={24} aria-label="Couper"><ScissorsIcon /></Tool>
              <ToolRow>
                <Tool $w={24} aria-label="Copier"><CopyIcon /></Tool>
                <Tool $w={14} aria-label="Options de copie"><Chevron /></Tool>
              </ToolRow>
              <Tool $w={24} aria-label="Reproduire la mise en forme"><BrushIcon /></Tool>
            </Stack>
          </GroupBody>
          <GroupFooter label="Presse-papiers" launch />
        </Group>

        <Group $w={236}>
          <GroupBody $left={8}>
            <Stack $top={12} $gap={8}>
              <ToolRow>
                <SelectWrap $w={122}><select aria-label="Police"><option>Carlito</option></select><Chevron /></SelectWrap>
                <SelectWrap $w={43}><select aria-label="Taille"><option>11</option></select><Chevron /></SelectWrap>
                <Tool $off aria-label="Agrandir"><GrowFont up /></Tool>
                <Tool $off aria-label="Réduire"><GrowFont /></Tool>
              </ToolRow>
              <ToolRow>
                <Tool $w={23} $off><Letter $weight={700}>G</Letter></Tool>
                <Tool $w={28} $off><Letter $italic>I</Letter></Tool>
                <Tool $w={25} $off><Letter $under>S</Letter></Tool>
                <Tool $w={15} $off aria-label="Soulignement"><Chevron /></Tool>
                <Rule />
                <Tool $w={27} $off aria-label="Bordures"><BordersIcon /></Tool>
                <Tool $w={14} $off aria-label="Options de bordure"><Chevron /></Tool>
                <Rule />
                <Tool $w={27} $off aria-label="Remplissage"><FillIcon /></Tool>
                <Tool $w={14} $off aria-label="Options de remplissage"><Chevron /></Tool>
                <Tool $w={28} $off aria-label="Couleur de police"><FontColor /></Tool>
                <Tool $w={12} $off aria-label="Options de couleur"><Chevron /></Tool>
              </ToolRow>
            </Stack>
          </GroupBody>
          <GroupFooter label="Police" launch off />
        </Group>

        <Group $w={391}>
          <GroupBody $left={7}>
            <Stack $top={12} $gap={8}>
              <ToolRow>
                <Tool $off aria-label="Aligner en haut"><Bars kind="c" top={0.5} /></Tool>
                <Tool $off aria-label="Aligner au centre"><Bars kind="c" top={3.5} /></Tool>
                <Tool $off aria-label="Aligner en bas"><Bars kind="c" top={5.5} /></Tool>
                <Rule />
                <Tool $off aria-label="Orientation"><OrientIcon /></Tool>
                <Tool $w={10} $off aria-label="Options d'orientation"><Chevron /></Tool>
              </ToolRow>
              <ToolRow>
                <Tool $off aria-label="Aligner à gauche"><Bars kind="l" /></Tool>
                <Tool $off aria-label="Centrer"><Bars kind="c" /></Tool>
                <Tool $off aria-label="Aligner à droite"><Bars kind="r" /></Tool>
                <Rule />
                <Tool $off aria-label="Diminuer le retrait"><Indent out /></Tool>
                <Tool $off aria-label="Augmenter le retrait"><Indent /></Tool>
              </ToolRow>
            </Stack>
            <Stack $top={11} $left={4}><Rule $h={62} /></Stack>
            <Stack $top={12} $gap={8} $left={10}>
              <WideTool><WrapIcon />Renvoyer à la ligne automatiquement</WideTool>
              <WideTool><MergeIcon />Fusionner et centrer<Tool as="span" $w={20} $off><Chevron /></Tool></WideTool>
            </Stack>
          </GroupBody>
          <GroupFooter label="Alignement" launch off />
        </Group>

        <Group $w={162}>
          <GroupBody $left={8}>
            <Stack $top={12} $gap={8}>
              <SelectWrap $w={146} $off><select aria-label="Format de nombre" disabled><option> </option></select><Chevron /></SelectWrap>
              <ToolRow>
                <Tool $w={24} $off aria-label="Format comptabilité"><CurrencyIcon /></Tool>
                <Tool $w={12} aria-label="Options de devise"><Chevron /></Tool>
                <Tool $w={34} $off><Letter $size={17}>%</Letter></Tool>
                <Tool $w={20} $off><Letter $size={10}>000</Letter></Tool>
                <Rule />
                <Tool $off aria-label="Ajouter une décimale"><DecimalIcon add /></Tool>
                <Tool $off aria-label="Réduire les décimales"><DecimalIcon /></Tool>
              </ToolRow>
            </Stack>
          </GroupBody>
          <GroupFooter label="Nombre" launch off />
        </Group>

        <Group $w={269} $tint>
          <GroupBody $left={8}>
            <BigButton $w={92} $off><BigIcon><CondIcon /></BigIcon><Line>Mise en forme</Line><Line>conditionnelle<Chevron /></Line></BigButton>
            <BigButton $w={106} $off><BigIcon><TableStyleIcon /></BigIcon><Line>Mettre sous forme</Line><Line>de tableau<Chevron /></Line></BigButton>
            <BigButton $w={54} $off><BigIcon><CellStyleIcon /></BigIcon><Line>Styles de</Line><Line>cellules<Chevron /></Line></BigButton>
          </GroupBody>
          <GroupFooter label="Styles" />
        </Group>

        <Group $w={165} $tint>
          <GroupBody $left={6}>
            <BigButton $w={46}><BigIcon><InsertIcon /></BigIcon><Line>Insérer</Line><Line><Chevron /></Line></BigButton>
            <BigButton $w={60}><BigIcon><DeleteIcon /></BigIcon><Line>Supprimer</Line><Line><Chevron /></Line></BigButton>
            <BigButton $w={48}><BigIcon><FormatIcon /></BigIcon><Line>Format</Line><Line><Chevron /></Line></BigButton>
          </GroupBody>
          <GroupFooter label="Cellules" />
        </Group>

        <Group $w={184} $tint>
          <GroupBody $left={9}>
            <Stack $top={4}>
              {[['Somme', <SigmaIcon key="s" />], ['Remplissage', <DownIcon key="d" />], ['Effacer', <EraserIcon key="e" />]].map(([n, icon], i) => (
                <ToolRow key={i}>
                  <Tool $w={22} $off aria-label={n as string}>{icon}</Tool>
                  <Tool $w={16} $off={i === 2} aria-label={`Options ${n}`}><Chevron /></Tool>
                </ToolRow>
              ))}
            </Stack>
            <BigButton $w={50} $off><BigIcon><SortIcon /></BigIcon><Line>Trier et</Line><Line>filtrer<Chevron /></Line></BigButton>
            <BigButton $w={78}><BigIcon><FindIcon /></BigIcon><Line>Rechercher et</Line><Line>sélectionner<Chevron /></Line></BigButton>
          </GroupBody>
          <GroupFooter label="Édition" />
        </Group>

        <Group $w={96}>
          <GroupBody $center>
            <BigButton $w={80} $off><BigIcon><AddinIcon /></BigIcon><Line>Compléments</Line></BigButton>
          </GroupBody>
          <GroupFooter label="Compléments" />
        </Group>
        <CollapseSlot>
          <button aria-label="Réduire le ruban"><Ic w={11} h={7}><path d="M1 6L5.500 1.500L10 6" strokeWidth="1.300" /></Ic></button>
        </CollapseSlot>
      </Groups>
      <QuickBar>
        <QuickButton $w={95}><SaveIcon />Enregistrer</QuickButton>
        <QuickButton $w={63} $off><UndoIcon />Annuler</QuickButton>
        <Tool $w={20} $off aria-label="Historique d'annulation"><Chevron /></Tool>
        <QuickButton $w={68} $pad={6} $off><RedoIcon />Refaire</QuickButton>
        <Tool $w={12} $off aria-label="Historique de rétablissement"><Chevron /></Tool>
        <Rule $m={5} />
        <Tool $w={26} aria-label="Personnaliser"><Ic w={9} h={8}><path d="M1 1H8M1.500 4L4.500 7L7.500 4" strokeWidth="1.300" /></Ic></Tool>
      </QuickBar>
    </RibbonCard>
  );
}

export default function App() {
  return (
    <Window>
      <Global />
      <TitleBar>
        <DocName><ExcelLogo />{'01-llc-expense-tracker-pro-12-months  -  Excel'}</DocName>
        <SearchBox>
          <Ic w={16} h={16} color="#555"><circle cx="10" cy="6" r="4.800" /><path d="M6.500 9.500L1 15" /></Ic>
          <input aria-label="Rechercher" placeholder="Rechercher" />
        </SearchBox>
        <WindowControls>
          <Avatar /><Avatar />
          <Controls>
            <ControlButton aria-label="Réduire"><Ic w={11} h={11} color="#222"><path d="M0 5.500H10" /></Ic></ControlButton>
            <ControlButton aria-label="Restaurer"><Ic w={11} h={11} color="#222"><path d="M.5 2.500H8.500V10.500H.5Z" /><path d="M2.500 .5H9Q10.500 .5 10.500 2V8.500" /></Ic></ControlButton>
            <ControlButton aria-label="Fermer"><Ic w={11} h={11} color="#222"><path d="M.5 .5L10.500 10.500M10.500 .5L.5 10.500" /></Ic></ControlButton>
          </Controls>
        </WindowControls>
      </TitleBar>
      <TabRow>
        <TabList>{TABS.map(t => <RibbonTab key={t} $active={t === 'Accueil'}>{t}</RibbonTab>)}</TabList>
        <ShareButton>
          <Ic w={12} h={12}><path d="M4 3.500H.5V11.500H9.500V8.500M7 .8L11 4L7 7.200V5.500C5 5.500 3.800 6.500 3 8C3.200 5 4.500 3 7 2.700Z" /></Ic>
          Partager<Chevron />
        </ShareButton>
      </TabRow>
      <Ribbon />
      <FormulaBar>
        <Field $w={101} $pad={7}><input aria-label="Zone Nom" defaultValue="F14" /><Ic w={12} h={8}><path d="M1.500 1.500L6 6L10.500 1.500" strokeWidth="1.400" /></Ic></Field>
        <Dots $w={21}><DotsIcon /></Dots>
        <Field $w={73} $pad={5}>
          <Tool $w={14} $off aria-label="Annuler la saisie"><Ic w={12} h={12}><path d="M1 1L11 11M11 1L1 11" /></Ic></Tool>
          <Tool $w={30} $off aria-label="Valider"><Ic w={15} h={12}><path d="M.5 7L4.500 11L14.500 1" /></Ic></Tool>
          <Fx>fx</Fx>
        </Field>
        <Dots $w={5} />
        <Field $pad={10}><input aria-label="Formule" defaultValue="Registered Agent" /><Ic w={12} h={8}><path d="M1.500 1.500L6 6L10.500 1.500" strokeWidth="1.400" /></Ic></Field>
      </FormulaBar>
      <SheetArea>
        <Viewport>
          <Grid>
            <colgroup>
              <col width="23" />
              {WIDTHS.map((w, i) => <col key={i} width={w} />)}
              <col />
            </colgroup>
            <thead>
              <tr>
                <ColHead aria-label="Tout sélectionner" />
                {COLS.map(c => <ColHead key={c} scope="col" $on={c === 'F'}>{c}</ColHead>)}
                <ColHead />
              </tr>
            </thead>
            <tbody>{HEIGHTS.map((_, i) => <SheetRow key={i} n={i + 1} />)}</tbody>
          </Grid>
          <BarChart />
          <PieChart />
          <TrendChart />
        </Viewport>
        <VScroll><Triangle dir="u" /><VTrack /><Triangle dir="d" /></VScroll>
      </SheetArea>
      <TabBar>
        <SheetTabs>
          <ArrowPair><Triangle dir="l" c="#b5b5b5" /><Triangle dir="r" c="#b5b5b5" /></ArrowPair>
          <SheetTab $w={77}>README</SheetTab>
          <SheetTab $w={123}>Expense Tracker</SheetTab>
          <SheetTab $w={92} $active>Dashboard</SheetTab>
          <SheetTab $w={87}>Categories</SheetTab>
          <PlusSlot aria-label="Nouvelle feuille"><Ic w={17} h={17} color="#555"><circle cx="8.500" cy="8.500" r="7.800" /><path d="M4.500 8.500H12.500M8.500 4.500V12.500" strokeWidth="1.200" /></Ic></PlusSlot>
        </SheetTabs>
        <BarGap />
        <Dots $w={20}><DotsIcon /></Dots>
        <HScroll><Triangle dir="l" /><HThumb /><Triangle dir="r" /></HScroll>
      </TabBar>
      <StatusBar>
        <span>Prêt</span>
        <StatusItem $left={20}><Ic w={14} h={14}><path d="M.5 .5H13.500V6M.5 .5V12.500H6M.5 3H13.500M2.500 5.500H6M2.500 8H5" /><circle cx="9.500" cy="9.500" r="3.700" /><circle cx="9.500" cy="9.500" r="1.200" fill="currentColor" /></Ic></StatusItem>
        <StatusItem $left={17}><Ic w={15} h={14}><circle cx="6" cy="2" r="1.500" /><path d="M1 4L4 5.500V8.500L2.500 13M11 4L8 5.500V8M4 5H8M5.500 9L4.500 13M8 9.500L12 13.500M12.500 9L8 13.500" /></Ic>Accessibilité : consultez nos recommandations</StatusItem>
        <Spacer />
        <ViewButton $on aria-label="Normal"><Ic w={13} h={13} color="#222"><path d="M.5 .5H12.500V12.500H.5ZM.5 4.500H12.500M.5 8.500H12.500M4.500 .5V12.500M8.500 .5V12.500" /></Ic></ViewButton>
        <ViewButton aria-label="Mise en page"><Ic w={13} h={13} color="#222"><path d="M.5 .5H12.500V12.500H.5ZM3 2.500H10V10.500H3ZM4.500 5H8.500M4.500 7H8.500M4.500 9H8.500" /></Ic></ViewButton>
        <ViewButton aria-label="Sauts de page"><Ic w={13} h={13} color="#222"><path d="M.5 .5H12.500V12.500H.5ZM4.500 .5V7.500H9V.5M.5 7.500H4" /></Ic></ViewButton>
        <Tool $w={16} aria-label="Zoom arrière"><Ic w={8} h={8}><path d="M0 4H8" /></Ic></Tool>
        <ZoomRange type="range" min={10} max={190} defaultValue={70} aria-label="Zoom" />
        <Tool $w={12} aria-label="Zoom avant"><Ic w={8} h={8}><path d="M0 4H8M4 0V8" /></Ic></Tool>
        <ZoomValue>70 %</ZoomValue>
      </StatusBar>
    </Window>
  );
}
